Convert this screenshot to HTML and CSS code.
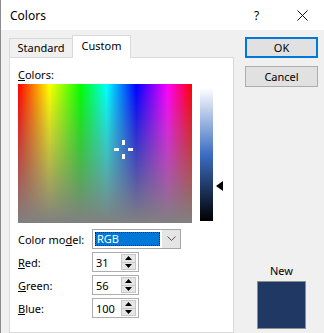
FILE: index.html
```html
<!DOCTYPE html>
<html>
<head>
    <title>Colors</title>
    <link rel="stylesheet" href="styles.css">
</head>
<body>
<div class="window">
    <div class="titlebar">
        <span class="title">Colors</span>
        <span class="help">?</span>
        <svg class="close" width="11" height="11" viewBox="0 0 11 11"><path d="M0.5 0.5 L10.5 10.5 M10.5 0.5 L0.5 10.5" stroke="#111" stroke-width="1"/></svg>
    </div>
    <div class="content">
        <div class="main">
            <div class="tabs">
                <div class="tab">Standard</div>
                <div class="tab active">Custom</div>
            </div>
            <div class="panel">
                <div class="label"><u>C</u>olors:</div>
                <div class="picker">
                    <div class="spectrum">
                        <svg class="cross" width="19" height="19" viewBox="0 0 19 19">
                            <rect x="8" y="0" width="3" height="5" fill="#fff"/>
                            <rect x="8" y="14" width="3" height="5" fill="#fff"/>
                            <rect x="0" y="8" width="5" height="3" fill="#fff"/>
                            <rect x="14" y="8" width="5" height="3" fill="#fff"/>
                        </svg>
                    </div>
                    <div class="lum"></div>
                    <svg class="marker" width="8" height="10" viewBox="0 0 8 10"><path d="M0 5 L7 0 L7 10 Z" fill="#000"/></svg>
                </div>
                <div class="row first">
                    <div class="lbl">Color mo<u>d</u>el:</div>
                    <div class="select">
                        <div class="sel-val">RGB</div>
                        <div class="sel-btn">
                            <svg width="9" height="6" viewBox="0 0 9 6"><path d="M0.5 0.5 L4.5 4.5 L8.5 0.5" fill="none" stroke="#555" stroke-width="1"/></svg>
                        </div>
                    </div>
                </div>
                <div class="row">
                    <div class="lbl"><u>R</u>ed:</div>
                    <div class="spin">
                        <div class="val">31</div>
                        <div class="arrows">
                            <div class="half"><svg width="7" height="4" viewBox="0 0 7 4"><path d="M0 4 L3.5 0 L7 4 Z" fill="#000"/></svg></div>
                            <div class="half"><svg width="7" height="4" viewBox="0 0 7 4"><path d="M0 0 L3.5 4 L7 0 Z" fill="#000"/></svg></div>
                        </div>
                    </div>
                </div>
                <div class="row">
                    <div class="lbl"><u>G</u>reen:</div>
                    <div class="spin">
                        <div class="val">56</div>
                        <div class="arrows">
                            <div class="half"><svg width="7" height="4" viewBox="0 0 7 4"><path d="M0 4 L3.5 0 L7 4 Z" fill="#000"/></svg></div>
                            <div class="half"><svg width="7" height="4" viewBox="0 0 7 4"><path d="M0 0 L3.5 4 L7 0 Z" fill="#000"/></svg></div>
                        </div>
                    </div>
                </div>
                <div class="row">
                    <div class="lbl"><u>B</u>lue:</div>
                    <div class="spin">
                        <div class="val">100</div>
                        <div class="arrows">
                            <div class="half"><svg width="7" height="4" viewBox="0 0 7 4"><path d="M0 4 L3.5 0 L7 4 Z" fill="#000"/></svg></div>
                            <div class="half"><svg width="7" height="4" viewBox="0 0 7 4"><path d="M0 0 L3.5 4 L7 0 Z" fill="#000"/></svg></div>
                        </div>
                    </div>
                </div>
            </div>
        </div>
        <div class="side">
            <div class="btn default">OK</div>
            <div class="btn">Cancel</div>
            <div class="new">
                <div class="new-label">New</div>
                <div class="swatch"></div>
            </div>
        </div>
    </div>
</div>
</body>
</html>
```

FILE: styles.css
```css
body {
    margin: 0;
    font-family: "Noto Sans", sans-serif;
    font-size: 11px;
    color: #000;
}
.window {
    width: 323px;
    height: 333px;
    border-left: 1px solid #8c8c8c;
    background: #f0f0f0;
    display: flex;
    flex-direction: column;
    overflow: hidden;
}
.titlebar {
    height: 30px;
    background: #fff;
    display: flex;
    align-items: center;
    padding-left: 9px;
    font-size: 12px;
}
.title {
    flex: 1;
}
.help {
    width: 7px;
    margin-right: 36px;
}
.close {
    margin-right: 16px;
}
.content {
    flex: 1;
    display: flex;
    padding: 5px 0 0 8px;
}
.main {
    width: 225px;
    display: flex;
    flex-direction: column;
}
.tabs {
    display: flex;
    align-items: flex-end;
    height: 22px;
}
.tab {
    box-sizing: border-box;
    height: 19px;
    line-height: 18px;
    border: 1px solid #d9d9d9;
    border-bottom: none;
    text-align: center;
}
.tab:first-child {
    width: 63px;
    border-right: none;
}
.tab.active {
    width: 59px;
    height: 23px;
    line-height: 20px;
    margin-bottom: -1px;
    background: #fff;
    position: relative;
    z-index: 1;
}
.panel {
    flex: 1;
    background: #fff;
    border: 1px solid #d9d9d9;
    padding: 8px 0 0 8px;
}
.label {
    height: 17px;
    line-height: 17px;
    margin-bottom: 1px;
}
.picker {
    display: flex;
    align-items: flex-start;
    position: relative;
}
.spectrum {
    width: 174px;
    height: 139px;
    position: relative;
    background:
        linear-gradient(to bottom, rgba(128,128,128,0), #808080),
        linear-gradient(to right, #f00, #ff0 18%, #0f0 36%, #0ff 51%, #00f 68%, #f0f 86%, #f00);
}
.cross {
    position: absolute;
    left: 96px;
    top: 56px;
}
.lum {
    width: 13px;
    height: 133px;
    margin: 4px 0 0 8px;
    background: linear-gradient(to bottom, #fff, hsl(218, 53%, 50%), #000);
}
.marker {
    position: absolute;
    left: 198px;
    top: 97px;
}
.row {
    display: flex;
    align-items: center;
    height: 20px;
    margin-top: 3px;
}
.row.first {
    margin-top: 6px;
    margin-bottom: 1px;
}
.lbl {
    width: 74px;
}
.select {
    box-sizing: border-box;
    width: 89px;
    height: 20px;
    border: 1px solid #a6a6a6;
    display: flex;
}
.sel-val {
    flex: 1;
    margin: 2px;
    background: #0078d7;
    color: #fff;
    border: 1px dotted #222;
    line-height: 12px;
    padding-left: 1px;
}
.sel-btn {
    width: 18px;
    background: #e5e5e5;
    display: flex;
    align-items: center;
    justify-content: center;
}
.spin {
    box-sizing: border-box;
    width: 47px;
    height: 20px;
    border: 1px solid #adadad;
    background: #fff;
    display: flex;
    align-items: center;
}
.val {
    flex: 1;
    padding-left: 3px;
}
.arrows {
    box-sizing: border-box;
    width: 15px;
    height: 16px;
    margin-right: 2px;
    border: 1px solid #c8c8c8;
    background: #e6e6e6;
    display: flex;
    flex-direction: column;
}
.half {
    flex: 1;
    display: flex;
    align-items: center;
    justify-content: center;
}
.half:first-child {
    border-bottom: 1px solid #c8c8c8;
}
.side {
    width: 73px;
    margin-left: 11px;
    padding: 2px 0 4px;
    display: flex;
    flex-direction: column;
}
.btn {
    box-sizing: border-box;
    height: 21px;
    line-height: 19px;
    border: 1px solid #adadad;
    background: #e1e1e1;
    text-align: center;
}
.btn.default {
    border: 2px solid #0078d7;
    line-height: 17px;
    margin-bottom: 8px;
}
.new {
    margin-top: auto;
    display: flex;
    flex-direction: column;
    align-items: center;
}
.new-label {
    height: 17px;
    line-height: 17px;
    margin-bottom: 2px;
}
.swatch {
    box-sizing: border-box;
    width: 49px;
    height: 48px;
    background: #1f3864;
    border: 1px solid #8d8d8d;
}
```
